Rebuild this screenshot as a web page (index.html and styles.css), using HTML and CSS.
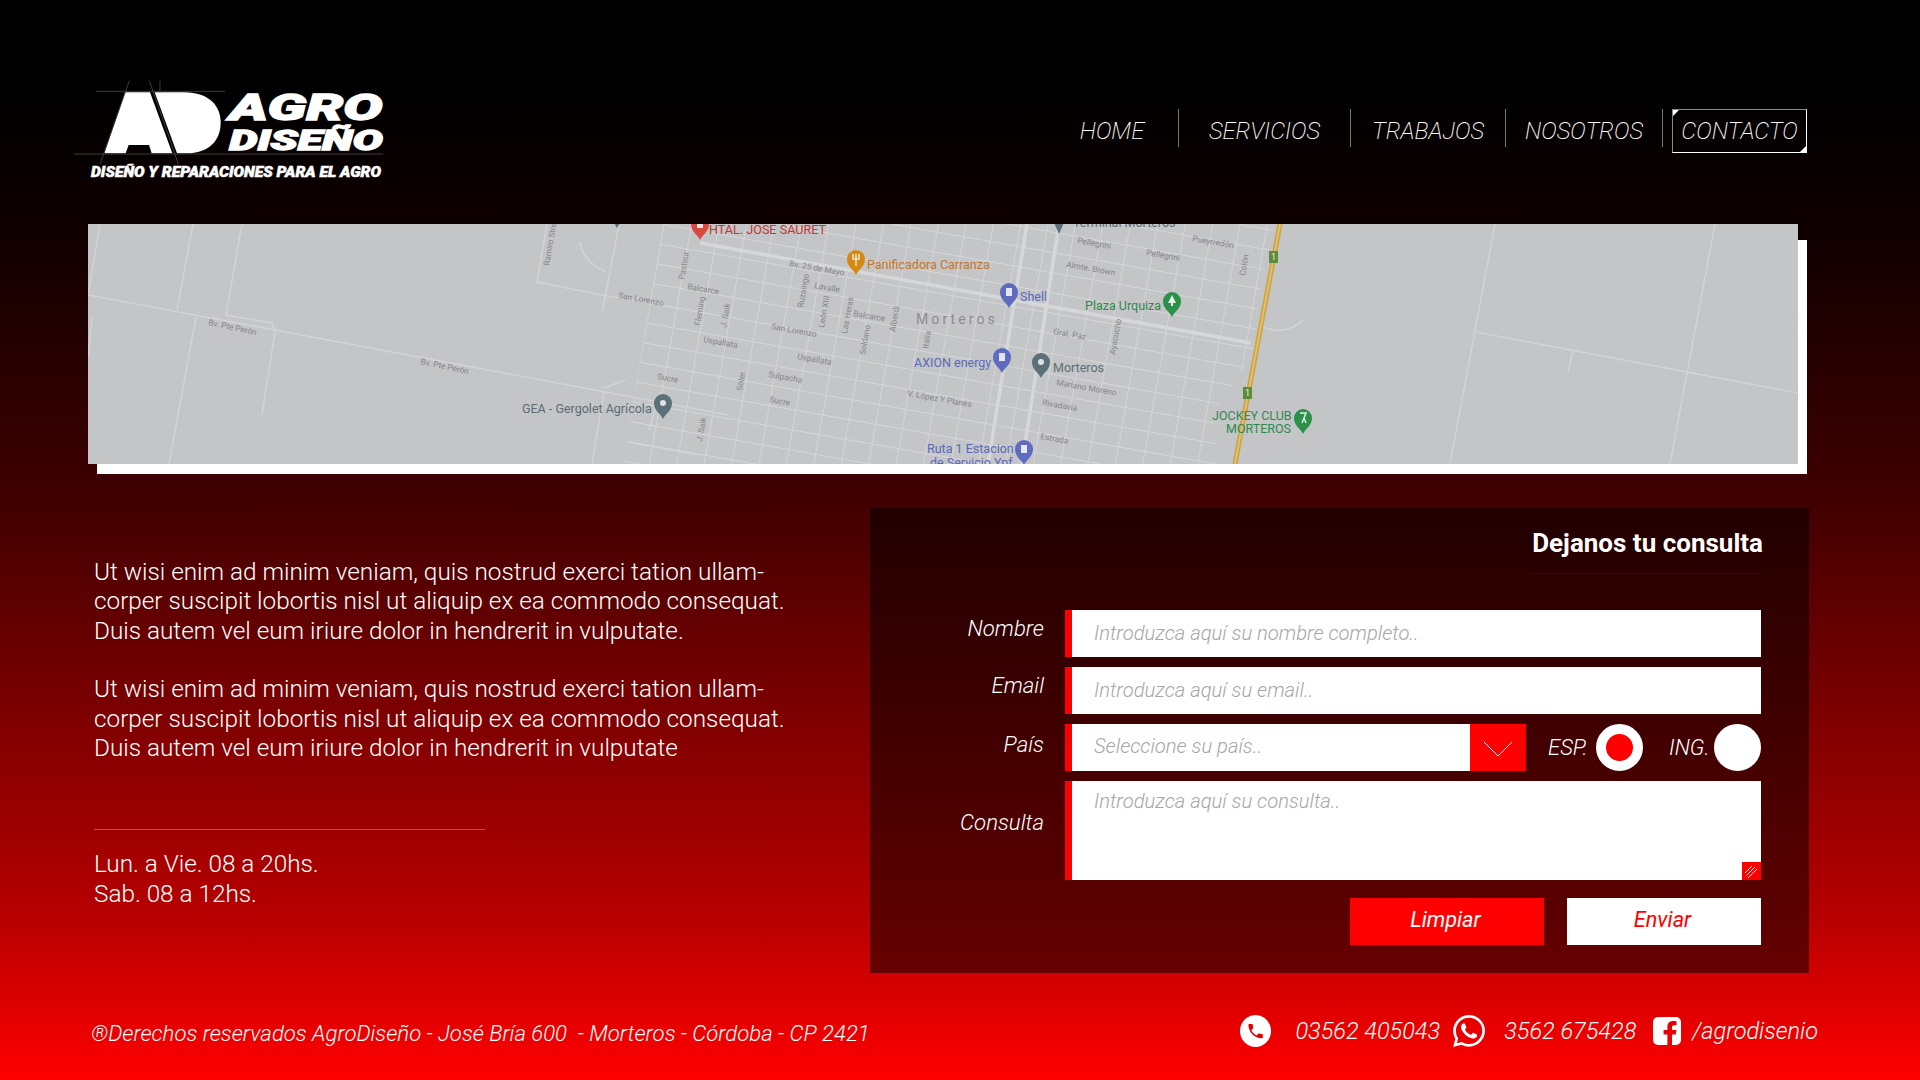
FILE: index.html
```html
<!DOCTYPE html>
<html lang="es">
<head>
    <meta charset="utf-8">
    <title>AgroDiseño - Contacto</title>
    <link rel="stylesheet" href="styles.css">
</head>
<body>

    <header class="top">
        <a class="logo" href="#">
            <svg width="360" height="140" viewBox="0 0 1080 420">
                <path class="logo-mark" d="M195 97 L270 97 L337 280 L275 280 L267 255 L206 255 L197 280 L133 280 Z"/>
                <path class="logo-mark" d="M284 97 L372 97 C450 97 482 140 482 188 C482 240 448 280 378 280 L351 280 Z"/>
                <path class="logo-line" d="M108 94 H495 M42 282 H970 M208 62 L120 312 M268 62 L355 312 M300 62 V97"/>
                <text class="logo-word" x="508" y="180" font-size="112" textLength="460" lengthAdjust="spacingAndGlyphs">AGRO</text>
                <text class="logo-word" x="508" y="270" font-size="82" textLength="460" lengthAdjust="spacingAndGlyphs">DISEÑO</text>
                <text class="logo-tag" x="93" y="350" font-size="42" textLength="870" lengthAdjust="spacingAndGlyphs">DISEÑO Y REPARACIONES PARA EL AGRO</text>
            </svg>
        </a>
        <nav class="menu">
            <a class="menu-item" href="#">HOME</a>
            <a class="menu-item" href="#">SERVICIOS</a>
            <a class="menu-item" href="#">TRABAJOS</a>
            <a class="menu-item" href="#">NOSOTROS</a>
            <a class="menu-active" href="#">CONTACTO</a>
        </nav>
    </header>

    <div class="map-frame">
        <svg class="map" width="1710" height="240" viewBox="0 0 1710 240">
            <defs>
                <pattern id="blocks" width="27" height="20" patternUnits="userSpaceOnUse" patternTransform="rotate(10)">
                    <path d="M0 0 H27 M0 0 V20" class="road-thin"/>
                </pattern>
                <clipPath id="town">
                    <path d="M575 0 H1186 L1172 70 L1165 130 L1125 190 L1130 240 H535 Z"/>
                </clipPath>
                <path id="pin" d="M0 16 C-2 11 -9 8 -9 0 A9 9 0 0 1 9 0 C9 8 2 11 0 16 Z"/>
            </defs>
            <rect width="1710" height="240" class="map-bg"/>
            <rect width="1710" height="240" fill="url(#blocks)" clip-path="url(#town)"/>

            <!-- camino de afuera -->
            <path class="road" d="M0 71 L640 191 M12 0 L0 71 M105 0 L89 86 M154 0 L138 91 L184 99 L187 108 L174 191 M108 93 L81 240 M4 94 L0 134"/>
            <path class="road" d="M531 1 L514 89 M459 0 L449 58 L514 71 L584 83 M492 18 C494 34 506 42 518 48 M516 164 L537 156 M516 168 L504 240 M539 218 L612 231 M572 168 L561 206"/>
            <path class="road" d="M1407 0 L1362 240 M1627 0 L1582 240 M1388 108 L1710 169 M1485 126 L1480 148 M1172 102 C1190 110 1205 106 1215 96"/>

            <!-- avenidas -->
            <path class="road-main" d="M971 0 L934 240 M939 0 L900 240 M612 19 L1163 119"/>
            <path class="road-high" d="M1192 0 L1147 240"/>
            <path class="road-high-in" d="M1192 0 L1147 240"/>
            <rect x="1181" y="27" width="9" height="12" class="shield"/>
            <rect x="1155" y="163" width="9" height="12" class="shield"/>
            <text x="1185.500" y="36" class="shield-text">1</text>
            <text x="1159.500" y="172" class="shield-text">1</text>

            <!-- calles -->
            <g class="street">
                <text x="120" y="101" transform="rotate(12 120 101)">Bv. Pte Perón</text>
                <text x="332" y="140" transform="rotate(12 332 140)">Bv. Pte Perón</text>
                <text x="530" y="74" transform="rotate(10 530 74)">San Lorenzo</text>
                <text x="599" y="65" transform="rotate(10 599 65)">Balcarce</text>
                <text x="569" y="155" transform="rotate(10 569 155)">Sucre</text>
                <text x="615" y="118" transform="rotate(10 615 118)">Uspallata</text>
                <text x="701" y="42" transform="rotate(10 701 42)">Bv. 25 de Mayo</text>
                <text x="726" y="64" transform="rotate(10 726 64)">Lavalle</text>
                <text x="765" y="92" transform="rotate(10 765 92)">Balcarce</text>
                <text x="683" y="105" transform="rotate(10 683 105)">San Lorenzo</text>
                <text x="709" y="135" transform="rotate(10 709 135)">Uspallata</text>
                <text x="680" y="153" transform="rotate(10 680 153)">Sulpacha</text>
                <text x="681" y="178" transform="rotate(10 681 178)">Sucre</text>
                <text x="819" y="172" transform="rotate(10 819 172)">V. López Y Planes</text>
                <text x="965" y="110" transform="rotate(10 965 110)">Gral. Paz</text>
                <text x="968" y="161" transform="rotate(10 968 161)">Mariano Moreno</text>
                <text x="954" y="181" transform="rotate(10 954 181)">Rivadavia</text>
                <text x="952" y="215" transform="rotate(10 952 215)">Estrada</text>
                <text x="989" y="19" transform="rotate(10 989 19)">Pellegrini</text>
                <text x="1058" y="31" transform="rotate(10 1058 31)">Pellegrini</text>
                <text x="1104" y="17" transform="rotate(10 1104 17)">Pueyrredón</text>
                <text x="978" y="43" transform="rotate(10 978 43)">Almte. Brown</text>
                <text x="461" y="42" transform="rotate(-80 461 42)">Ramiro Street</text>
                <text x="596" y="56" transform="rotate(-80 596 56)">Pasteur</text>
                <text x="612" y="102" transform="rotate(-80 612 102)">Fleming</text>
                <text x="614" y="218" transform="rotate(-80 614 218)">J. Saik</text>
                <text x="638" y="104" transform="rotate(-80 638 104)">J. Saik</text>
                <text x="654" y="167" transform="rotate(-80 654 167)">Soler</text>
                <text x="715" y="84" transform="rotate(-80 715 84)">Ruzaingo</text>
                <text x="736" y="104" transform="rotate(-80 736 104)">León XIII</text>
                <text x="759" y="110" transform="rotate(-80 759 110)">Las Heras</text>
                <text x="777" y="131" transform="rotate(-80 777 131)">Soldano</text>
                <text x="807" y="108" transform="rotate(-80 807 108)">Alberdi</text>
                <text x="840" y="125" transform="rotate(-80 840 125)">Italia</text>
                <text x="1027" y="131" transform="rotate(-80 1027 131)">Ayacucho</text>
                <text x="1157" y="52" transform="rotate(-80 1157 52)">Colón</text>
            </g>
            <text x="828" y="100" class="town-name">Morteros</text>

            <!-- lugares -->
            <text x="985" y="3" class="place place-gray">Terminal Morteros</text>
            <text x="621" y="10" class="place place-red">HTAL. JOSE SAURET</text>
            <text x="779" y="45" class="place place-orange">Panificadora Carranza</text>
            <text x="932" y="77" class="place place-blue">Shell</text>
            <text x="997" y="86" class="place place-green">Plaza Urquiza</text>
            <text x="826" y="143" class="place place-blue">AXION energy</text>
            <text x="965" y="148" class="place place-gray">Morteros</text>
            <text x="839" y="229" class="place place-blue">Ruta 1 Estacion</text>
            <text x="842" y="243" class="place place-blue">de Servicio Ypf</text>
            <text x="1124" y="196" class="place place-green">JOCKEY CLUB</text>
            <text x="1138" y="209" class="place place-green">MORTEROS</text>
            <text x="434" y="189" class="place place-gray">GEA - Gergolet Agrícola</text>

            <g transform="translate(529 -8)"><path class="pin-gray" d="M-7 0 H7 L0 12 Z"/></g>
            <g transform="translate(971 -6)"><path class="pin-gray" d="M-7 0 H7 L0 16 Z"/></g>
            <g transform="translate(612 0)"><use href="#pin" class="pin-red"/><rect x="-3" y="-3" width="6" height="7" fill="#efe5e3"/></g>
            <g transform="translate(768 35)"><use href="#pin" class="pin-orange"/><path d="M-3 -5 V0 H3 V-5 M0 -5 V7" stroke="#f2e2c8" stroke-width="1.500" fill="none"/></g>
            <g transform="translate(921 68)"><use href="#pin" class="pin-blue"/><rect x="-3" y="-4" width="6" height="8" fill="#e4e6f2"/></g>
            <g transform="translate(1084 77)"><use href="#pin" class="pin-green"/><path d="M0 -6 L4 2 H1 V5 H-1 V2 H-4 Z" fill="#e2efe5"/></g>
            <g transform="translate(914 133)"><use href="#pin" class="pin-blue"/><rect x="-3" y="-4" width="6" height="8" fill="#e4e6f2"/></g>
            <g transform="translate(953 138)"><use href="#pin" class="pin-gray"/><circle r="3" fill="#dfe3e5"/></g>
            <g transform="translate(936 225)"><use href="#pin" class="pin-blue"/><rect x="-3" y="-4" width="6" height="8" fill="#e4e6f2"/></g>
            <g transform="translate(1215 194)"><use href="#pin" class="pin-green"/><path d="M-3 -5 H3 L-1 5 M1 0 L3 5" stroke="#e2efe5" stroke-width="1.500" fill="none"/></g>
            <g transform="translate(575 179)"><use href="#pin" class="pin-gray"/><circle r="3" fill="#dfe3e5"/></g>
        </svg>
    </div>

    <main class="content">
        <section class="info">
            <p>Ut wisi enim ad minim veniam, quis nostrud exerci tation ullam-<br>corper suscipit lobortis nisl ut aliquip ex ea commodo consequat.<br>Duis autem vel eum iriure dolor in hendrerit in vulputate.</p>
            <p>Ut wisi enim ad minim veniam, quis nostrud exerci tation ullam-<br>corper suscipit lobortis nisl ut aliquip ex ea commodo consequat.<br>Duis autem vel eum iriure dolor in hendrerit in vulputate</p>
            <hr class="info-line">
            <p>Lun. a Vie. 08 a 20hs.<br>Sab. 08 a 12hs.</p>
        </section>

        <form class="panel">
            <h2 class="panel-title">Dejanos tu consulta</h2>
            <div class="fields">
                <label class="field-label" for="nombre">Nombre</label>
                <input class="field" type="text" id="nombre" placeholder="Introduzca aquí su nombre completo..">

                <label class="field-label" for="email">Email</label>
                <input class="field" type="text" id="email" placeholder="Introduzca aquí su email..">

                <label class="field-label field-label-pais" for="pais">País</label>
                <div class="field-row">
                    <div class="select">
                        <input class="field field-pais" type="text" id="pais" placeholder="Seleccione su país..">
                        <span class="select-arrow">
                            <svg width="28" height="14" viewBox="0 0 28 14"><path d="M0 0 L14 14 L28 0" fill="none" stroke="#fff"/></svg>
                        </span>
                    </div>
                    <span class="lang lang-esp">ESP.</span>
                    <span class="radio radio-on"></span>
                    <span class="lang lang-ing">ING.</span>
                    <span class="radio"></span>
                </div>

                <label class="field-label field-label-area" for="consulta">Consulta</label>
                <div class="area">
                    <textarea class="field field-area" id="consulta" placeholder="Introduzca aquí su consulta.."></textarea>
                    <span class="area-grip">
                        <svg width="19" height="18" viewBox="0 0 19 18"><path d="M3 11 L10 4 M4.500 13.500 L13 5 M6 16 L15 7" stroke="#fff"/></svg>
                    </span>
                </div>

                <div class="buttons">
                    <button class="btn btn-red" type="reset">Limpiar</button>
                    <button class="btn btn-white" type="submit">Enviar</button>
                </div>
            </div>
        </form>
    </main>

    <footer class="bottom">
        <span class="legal">®Derechos reservados AgroDiseño - José Bría 600&nbsp; - Morteros - Córdoba - CP 2421</span>
        <div class="contact">
            <svg class="icon-phone" width="31" height="32" viewBox="0 0 31 32">
                <ellipse cx="15.500" cy="16" rx="15.500" ry="16" fill="#fff"/>
                <path transform="translate(6 6.500) scale(.8)" fill="#e00000" d="M6.620 10.790c1.440 2.830 3.760 5.140 6.590 6.590l2.200-2.200c.27-.27.670-.36 1.020-.24 1.120.37 2.330.57 3.570.57.55 0 1 .45 1 1V20c0 .55-.45 1-1 1-9.390 0-17-7.610-17-17 0-.55.45-1 1-1h3.500c.55 0 1 .45 1 1 0 1.250.2 2.450.57 3.570.11.35.03.74-.25 1.020l-2.200 2.200z"/>
            </svg>
            <span class="phone-a">03562 405043</span>
            <svg class="icon-wa" width="32" height="32" viewBox="0 0 24 24">
                <path fill="#fff" d="M17.472 14.382c-.297-.149-1.758-.867-2.030-.967-.273-.099-.471-.148-.670.150-.197.297-.767.966-.940 1.164-.173.199-.347.223-.644.075-.297-.150-1.255-.463-2.390-1.475-.883-.788-1.480-1.761-1.653-2.059-.173-.297-.018-.458.130-.606.134-.133.298-.347.446-.520.149-.174.198-.298.298-.497.099-.198.050-.371-.025-.520-.075-.149-.669-1.612-.916-2.207-.242-.579-.487-.500-.669-.510-.173-.008-.371-.010-.570-.010-.198 0-.520.074-.792.372-.272.297-1.040 1.016-1.040 2.479 0 1.462 1.065 2.875 1.213 3.074.149.198 2.096 3.200 5.077 4.487.709.306 1.262.489 1.694.625.712.227 1.360.195 1.871.118.571-.085 1.758-.719 2.006-1.413.248-.694.248-1.289.173-1.413-.074-.124-.272-.198-.570-.347m-5.421 7.403h-.004a9.870 9.870 0 01-5.031-1.378l-.361-.214-3.741.982.998-3.648-.235-.374a9.860 9.860 0 01-1.510-5.260c.001-5.450 4.436-9.884 9.888-9.884 2.640 0 5.122 1.030 6.988 2.898a9.825 9.825 0 012.893 6.994c-.003 5.450-4.437 9.884-9.885 9.884m8.413-18.297A11.815 11.815 0 0012.050 0C5.495 0 .160 5.335.157 11.892c0 2.096.547 4.142 1.588 5.945L.057 24l6.305-1.654a11.882 11.882 0 005.683 1.448h.005c6.554 0 11.890-5.335 11.893-11.893a11.821 11.821 0 00-3.480-8.413z"/>
            </svg>
            <span class="phone-b">3562 675428</span>
            <svg class="icon-fb" width="28" height="28" viewBox="0 0 28 28">
                <path fill="#fff" fill-rule="evenodd" d="M5 0 H23 A5 5 0 0 1 28 5 V23 A5 5 0 0 1 23 28 H19 V17.500 H22.800 L23.400 13 H19 V10.500 C19 9.200 19.400 8.300 21.200 8.300 H23.500 V4.300 C23.100 4.200 21.700 4.100 20.100 4.100 C16.700 4.100 14.400 6.200 14.400 10 V13 H10.600 V17.500 H14.400 V28 H5 A5 5 0 0 1 0 23 V5 A5 5 0 0 1 5 0 Z"/>
            </svg>
            <span class="face">/agrodisenio</span>
        </div>
    </footer>

</body>
</html>
```

FILE: styles.css
```css
* {
    box-sizing: border-box;
}

html, body {
    margin: 0;
    height: 1080px;
    overflow: hidden;
}

body {
    font-family: 'Roboto', 'Liberation Sans', sans-serif;
    font-weight: 300;
    color: #fff;
    background: linear-gradient(#000 0, #000 90px, #100000 230px, #400000 500px, #b80000 920px, #ff0000 1080px);
}

/* cabecera */
.top {
    height: 224px;
    display: flex;
    justify-content: space-between;
    align-items: flex-start;
    padding: 60px 113px 0 60px;
}

.logo {
    display: block;
    height: 140px;
}

.logo-mark {
    fill: #fff;
}

.logo-line {
    fill: none;
    stroke: #3d3d3d;
    stroke-width: 3;
}

.logo-word {
    font-family: 'Roboto', sans-serif;
    font-weight: 900;
    font-style: italic;
    fill: #fff;
    stroke: #fff;
    stroke-width: 4;
}

.logo-tag {
    font-family: 'Roboto', sans-serif;
    font-weight: 900;
    font-style: italic;
    fill: #fff;
    stroke: #fff;
    stroke-width: 1.500;
}

.menu {
    display: flex;
    align-items: flex-start;
    margin-top: 49px;
    font-size: 23.700px;
    font-weight: 200;
    font-style: italic;
}

.menu a {
    color: #fff;
    text-decoration: none;
}

.menu-item {
    height: 38px;
    line-height: 44px;
    text-align: center;
    border-right: 1px solid #777;
}

.menu-item:nth-child(1) { width: 133px; }
.menu-item:nth-child(2) { width: 172px; }
.menu-item:nth-child(3) { width: 155px; }
.menu-item:nth-child(4) { width: 157px; }

.menu-active {
    position: relative;
    width: 135px;
    height: 44px;
    line-height: 42px;
    margin-left: 9px;
    text-align: center;
    border: 1px solid #fff;
    border-top-color: #8a8a8a;
    border-left-color: #8a8a8a;
}

.menu-active::before,
.menu-active::after {
    content: "";
    position: absolute;
    width: 0;
    height: 0;
    border-style: solid;
}

.menu-active::before {
    top: 0;
    left: 0;
    border-width: 6px 6px 0 0;
    border-color: #fff transparent transparent transparent;
}

.menu-active::after {
    right: 0;
    bottom: 0;
    border-width: 0 0 6px 6px;
    border-color: transparent transparent #fff transparent;
}

/* mapa */
.map-frame {
    position: relative;
    width: 1710px;
    height: 240px;
    margin-left: 88px;
}

.map-frame::before {
    content: "";
    position: absolute;
    top: 16px;
    left: 9px;
    right: -9px;
    bottom: -10px;
    background: #fff;
}

.map {
    position: relative;
    display: block;
}

.map-bg { fill: #c4c5c7; }
.road { fill: none; stroke: #d2d3d5; stroke-width: 1.600; }
.road-thin { fill: none; stroke: #d5d6d8; stroke-width: 1.800; }
.road-main { fill: none; stroke: #d6d7d9; stroke-width: 3.500; }
.road-high { fill: none; stroke: #c9a44a; stroke-width: 5; }
.road-high-in { fill: none; stroke: #e3c067; stroke-width: 2; }
.shield { fill: #5c8c3a; }

.shield-text {
    font: 400 9px 'Roboto', sans-serif;
    fill: #e6efdc;
    text-anchor: middle;
}

.street text {
    font: 400 8.300px 'Roboto', sans-serif;
    fill: #84868a;
}

.town-name {
    font: 400 14px 'Roboto', sans-serif;
    letter-spacing: 3.100px;
    fill: #8b8d91;
}

.place { font: 400 12.500px 'Roboto', sans-serif; }
.place-red { fill: #c9332c; font-size: 12.600px; }
.place-orange { fill: #c2772a; }
.place-blue { fill: #5a69b8; }
.place-green { fill: #2f8a4c; }
.place-gray { fill: #5b6d75; }

.pin-red { fill: #d8493f; }
.pin-orange { fill: #d68a16; }
.pin-blue { fill: #5f6bc0; }
.pin-green { fill: #2b9148; }
.pin-gray { fill: #5b7079; }

/* contenido */
.content {
    display: flex;
    justify-content: space-between;
    margin-top: 44px;
    padding: 0 111px 0 94px;
}

.info {
    padding-top: 49px;
    font-size: 24.300px;
    line-height: 29.400px;
}

.info p {
    margin: 0 0 29px;
}

.info-line {
    width: 391px;
    height: 1px;
    margin: 67px 0 19px;
    border: 0;
    background: rgba(255, 255, 255, 0.3);
}

.panel {
    width: 939px;
    height: 465px;
    padding: 20px 46px 0 0;
    background: rgba(0, 0, 0, 0.5);
}

.panel-title {
    width: 231px;
    height: 46px;
    margin: 0 0 36px auto;
    font-size: 26px;
    font-weight: 700;
    line-height: 30px;
    text-align: right;
    border-bottom: 1px solid #500000;
}

.fields {
    display: grid;
    grid-template-columns: 174px 696px;
    justify-content: end;
    column-gap: 21px;
    row-gap: 10px;
    margin-right: 2px;
}

.field-label {
    padding-top: 3px;
    font-size: 22.200px;
    font-style: italic;
    line-height: 30px;
    text-align: right;
}

.field-label-pais {
    padding-top: 5px;
}

.field-label-area {
    padding-top: 26px;
}

.field {
    display: block;
    width: 100%;
    height: 47px;
    padding: 0 0 2px 22px;
    border: 0;
    border-left: 7px solid #f00;
    border-radius: 0;
    outline: none;
    background: #fff;
    font-family: inherit;
    font-size: 20.200px;
    font-weight: 300;
    font-style: italic;
}

.field-pais {
    padding-bottom: 4px;
}

.field::placeholder {
    color: #a6a6a6;
    opacity: 1;
}

.field-row {
    display: flex;
    align-items: center;
}

.select {
    display: flex;
    width: 461px;
}

.select-arrow {
    flex: none;
    width: 56px;
    height: 47px;
    padding-top: 18px;
    text-align: center;
    background: #f00;
}

.select-arrow svg {
    display: block;
    margin: 0 auto;
}

.lang {
    font-size: 22px;
    font-style: italic;
}

.lang-esp {
    width: 48px;
    margin: 0 0 0 22px;
}

.lang-ing {
    width: 39px;
    margin: 0 6px 0 26px;
}

.radio {
    display: block;
    flex: none;
    width: 47px;
    height: 47px;
    border: 10px solid #fff;
    border-radius: 50%;
    background: #fff;
}

.radio-on {
    background: #f00;
}

.area {
    position: relative;
    height: 99px;
}

.field-area {
    height: 99px;
    padding-top: 8px;
    resize: none;
    overflow: hidden;
}

.area-grip {
    position: absolute;
    right: 0;
    bottom: 0;
    width: 19px;
    height: 18px;
    background: #f00;
}

.area-grip svg {
    display: block;
}

.buttons {
    grid-column: 2;
    display: flex;
    justify-content: flex-end;
    gap: 23px;
    margin-top: 8px;
}

.btn {
    width: 194px;
    height: 47px;
    padding: 0 3px 5px 0;
    border: 0;
    font-family: inherit;
    font-size: 21.700px;
    font-weight: 400;
    font-style: italic;
}

.btn-red {
    background: #f00;
    color: #fff;
}

.btn-white {
    background: #fff;
    color: #f00;
}

/* pie */
.bottom {
    display: flex;
    justify-content: space-between;
    align-items: center;
    height: 40px;
    margin-top: 40px;
    padding: 0 102px 0 91px;
    font-size: 22.150px;
    font-style: italic;
}

.contact {
    display: flex;
    align-items: center;
    margin-top: -4px;
    font-size: 23.500px;
}

.phone-a { margin-left: 24px; }
.icon-wa { margin-left: 13px; }
.phone-b { margin-left: 19px; }
.icon-fb { margin-left: 17px; }
.face { margin-left: 11px; }
```
